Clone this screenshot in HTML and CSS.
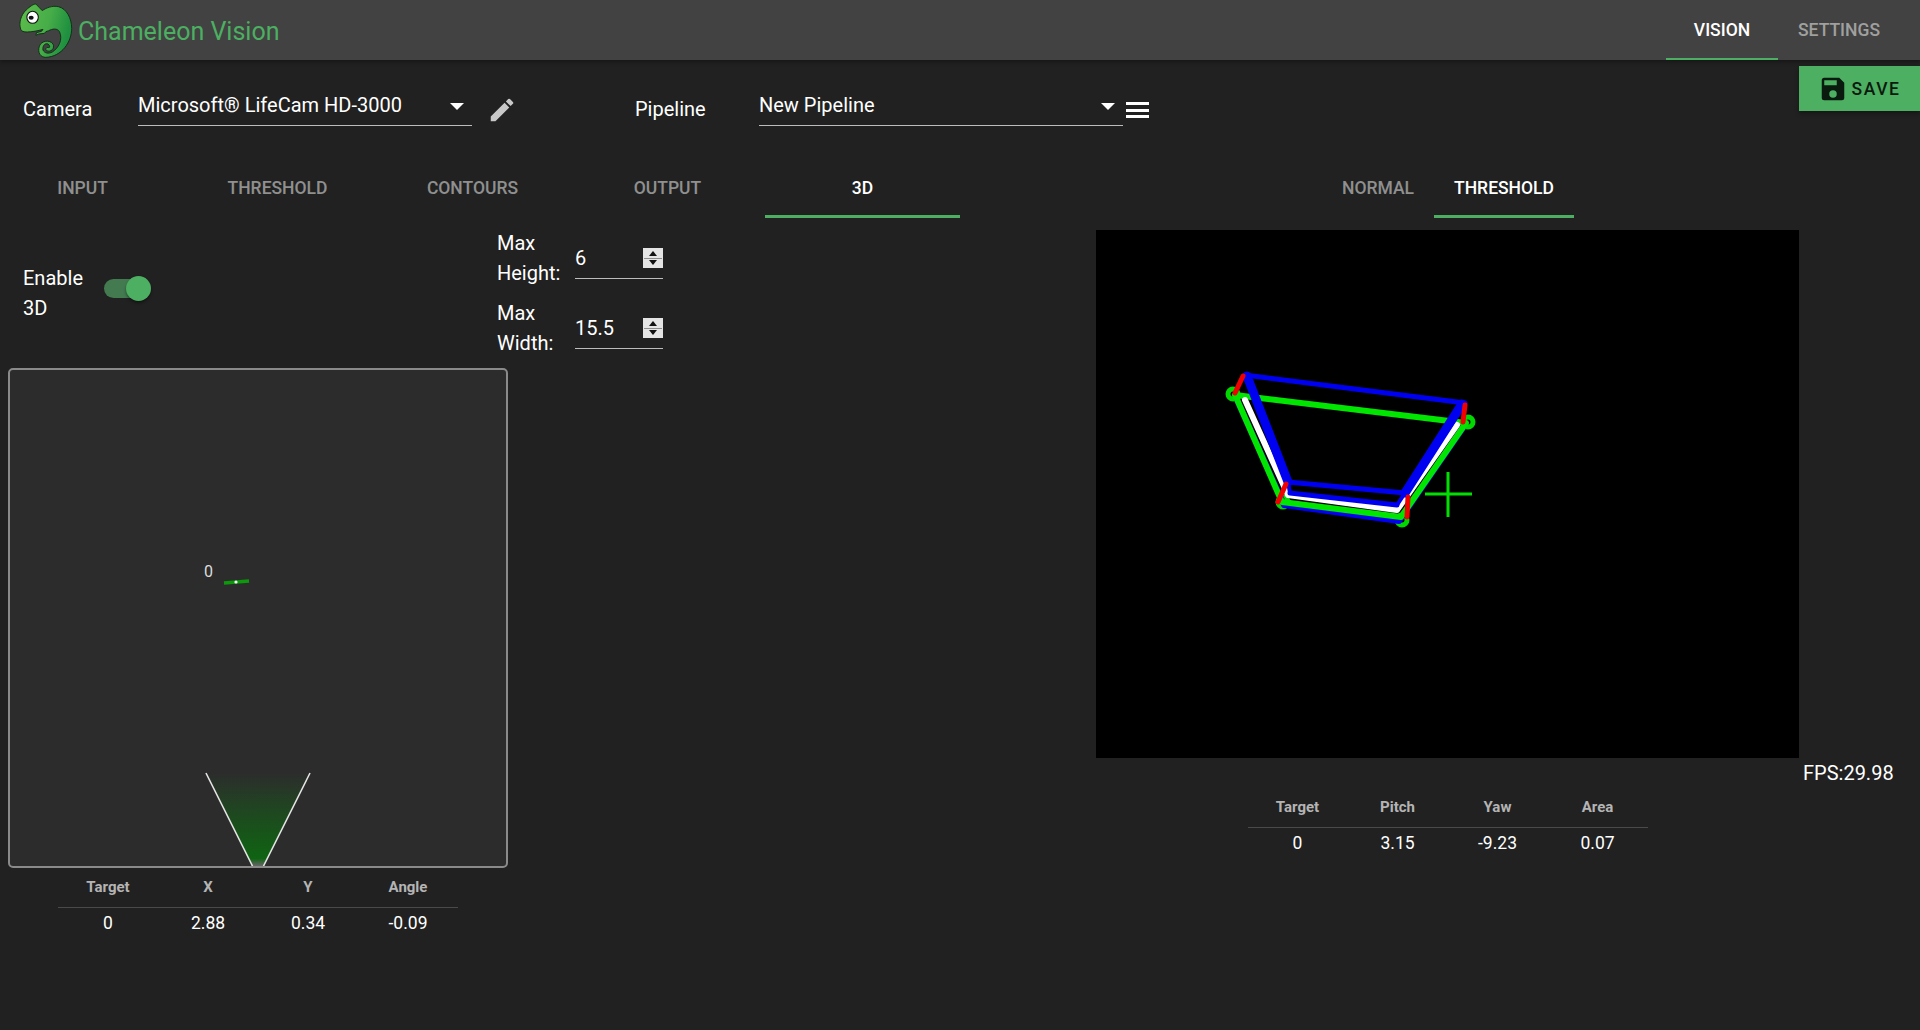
FILE: index.html
```html
<!DOCTYPE html>
<html lang="en">
<head>
<meta charset="utf-8">
<title>Chameleon Vision</title>
<link rel="stylesheet" href="styles.css">
</head>
<body>
<header class="appbar">
  <svg class="logo" viewBox="0 0 198 180" preserveAspectRatio="none" aria-hidden="true">
    <defs><linearGradient id="lg" x1="0" y1="0" x2="1" y2="0.25"><stop offset="0" stop-color="#5dbd4a"/><stop offset="0.6" stop-color="#46ad48"/><stop offset="1" stop-color="#1f9040"/></linearGradient></defs>
    <path d="M30 88 C24 70 30 45 45 30 C55 20 65 12 72 12 C78 18 84 26 90 32 C100 24 118 16 135 20 C158 26 172 55 172 85 C172 125 145 170 100 172 C85 172 76 158 82 138 C88 122 110 118 120 132 C126 145 114 158 102 152 C98 148 100 142 106 142 C112 146 112 136 106 132 C96 128 90 140 92 150 C96 160 108 162 118 156 C136 144 148 118 138 95 C132 84 118 86 108 92 L100 95 L96 100 L80 102 L72 106 L74 98 L88 94 L92 88 C80 92 60 96 48 96 C38 96 32 94 30 88 Z" fill="url(#lg)" stroke="#0a2a10" stroke-width="2.5"/>
    <ellipse cx="63" cy="52" rx="16" ry="18" fill="#fff" stroke="#111" stroke-width="3"/>
    <ellipse cx="59" cy="53" rx="7" ry="6" fill="#111"/>
  </svg>
  <span class="brand">Chameleon Vision</span>
  <nav class="nav-tabs">
    <a class="nav-tab active">VISION</a>
    <a class="nav-tab settings-tab">SETTINGS</a>
  </nav>
</header>
<main class="page">
  <div class="toolbar">
    <span class="label cam-label">Camera</span>
    <div class="select cam-select"><span>Microsoft® LifeCam HD-3000</span><i class="caret"></i></div>
    <svg class="pencil" viewBox="0 0 24 24" aria-hidden="true"><path d="M3 17.25V21h3.75L17.81 9.94l-3.75-3.75L3 17.25zM20.71 7.04a1 1 0 0 0 0-1.41l-2.34-2.34a1 1 0 0 0-1.41 0l-1.83 1.83 3.75 3.75 1.83-1.83z"/></svg>
    <span class="label pipe-label">Pipeline</span>
    <div class="select pipe-select"><span>New Pipeline</span><i class="caret"></i></div>
    <div class="burger"><i></i><i></i><i></i></div>
    <button class="save"><svg viewBox="0 0 24 24" aria-hidden="true"><path d="M17 3H5a2 2 0 0 0-2 2v14a2 2 0 0 0 2 2h14a2 2 0 0 0 2-2V7l-4-4zm-5 16a3 3 0 1 1 0-6 3 3 0 0 1 0 6zm3-10H5V5h10v4z"/></svg>SAVE</button>
  </div>
  <div class="columns">
    <section class="col-left">
      <div class="tabs main-tabs">
        <a class="tab">INPUT</a><a class="tab">THRESHOLD</a><a class="tab">CONTOURS</a><a class="tab">OUTPUT</a><a class="tab active">3D</a>
      </div>
      <div class="settings">
        <div class="enable">
          <span class="label enable-label">Enable<br>3D</span>
          <div class="switch"><i class="track"></i><i class="thumb"></i></div>
        </div>
        <div class="fields">
          <div class="field"><span class="label">Max<br>Height:</span><div class="num"><span>6</span><div class="spin"><b><i class="up"></i></b><b><i class="down"></i></b></div></div></div>
          <div class="field"><span class="label">Max<br>Width:</span><div class="num"><span>15.5</span><div class="spin"><b><i class="up"></i></b><b><i class="down"></i></b></div></div></div>
        </div>
      </div>
      <div class="plot">
        <span class="plot-num">0</span>
        <svg class="plot-svg" viewBox="0 0 500 500" aria-hidden="true">
          <defs><linearGradient id="fov" x1="0" y1="0" x2="0" y2="1"><stop offset="0" stop-color="#0f6a12" stop-opacity="0"/><stop offset="0.92" stop-color="#0f6412"/><stop offset="1" stop-color="#666"/></linearGradient></defs>
          <polygon points="198,405 302,405 256,498 244,498" fill="url(#fov)"/>
          <line x1="198" y1="405" x2="244.5" y2="498" class="fov-line"/>
          <line x1="302" y1="405" x2="255.5" y2="498" class="fov-line"/>
          <line x1="216" y1="215" x2="241" y2="213" stroke="#0a9a0a" stroke-width="3.5"/>
          <circle cx="228" cy="214" r="1.6" fill="#fff"/>
        </svg>
      </div>
      <table class="data left-table">
        <thead><tr><th>Target</th><th>X</th><th>Y</th><th>Angle</th></tr></thead>
        <tbody><tr><td>0</td><td>2.88</td><td>0.34</td><td>-0.09</td></tr></tbody>
      </table>
    </section>
    <section class="col-right">
      <div class="tabs view-tabs">
        <a class="tab normal">NORMAL</a><a class="tab thresh active">THRESHOLD</a>
      </div>
      <svg class="camera" viewBox="0 0 703 528" aria-hidden="true">
        <rect width="703" height="528" fill="#000"/>
        <g fill="none" stroke-linejoin="round" stroke-linecap="round">
          <circle cx="137" cy="164" r="5" stroke="#00d800" stroke-width="5"/>
          <circle cx="372" cy="192" r="5" stroke="#00d800" stroke-width="5"/>
          <circle cx="187" cy="272" r="5" stroke="#00d800" stroke-width="5"/>
          <circle cx="306" cy="290" r="5" stroke="#00d800" stroke-width="5"/>
          <path d="M141 170 L188 275 L303 291 L367 198" stroke="#0000f0" stroke-width="6"/>
          <polygon points="139,165 370,193 305,287 186,272" stroke="#00e600" stroke-width="6"/>
          <path d="M149 170 L192 265 L301 280 L361 195" stroke="#fff" stroke-width="6"/>
          <polygon points="149,145 369,173 309,263 192,252" stroke="#0000f0" stroke-width="5"/>
          <path d="M151 146 L192 252" stroke="#0000f0" stroke-width="9"/>
          <path d="M366 174 L309 263" stroke="#0000f0" stroke-width="9"/>
          <path d="M194 263 L301 275" stroke="#0000f0" stroke-width="5"/>
          <path d="M192 252 L194 263 M309 263 L301 275" stroke="#0000f0" stroke-width="4"/>
        </g>
        <g stroke="#f00000" stroke-width="5" stroke-linecap="round">
          <line x1="147" y1="146" x2="139" y2="163"/>
          <line x1="369" y1="175" x2="367" y2="192"/>
          <line x1="190" y1="254" x2="182" y2="272"/>
          <line x1="312" y1="267" x2="311" y2="287"/>
        </g>
        <g stroke="#00e000" stroke-width="3">
          <line x1="329" y1="264" x2="376" y2="264"/>
          <line x1="352" y1="242" x2="352" y2="287"/>
        </g>
      </svg>
      <div class="fps">FPS:29.98</div>
      <table class="data right-table">
        <thead><tr><th>Target</th><th>Pitch</th><th>Yaw</th><th>Area</th></tr></thead>
        <tbody><tr><td>0</td><td>3.15</td><td>-9.23</td><td>0.07</td></tr></tbody>
      </table>
    </section>
  </div>
</main>
</body>
</html>
```
FILE: styles.css
```css
* { box-sizing: border-box; }
html, body { margin: 0; height: 100%; }
body { background: #212121; color: #fff; font-family: Roboto, sans-serif; overflow: hidden; height: 1030px; }

.appbar { height: 60px; background: #424242; display: flex; align-items: center; padding-left: 10px; box-shadow: 0 2px 4px rgba(0,0,0,.35); position: relative; }
.logo { width: 71px; height: 60px; flex: none; }
.brand { margin-left: -3px; margin-top: 2px; color: #4caf61; font-size: 25px; font-weight: 400; }
.nav-tabs { margin-left: auto; display: flex; height: 60px; margin-right: 20px; }
.nav-tab { width: 112px; display: flex; align-items: center; justify-content: center; padding-top: 2px; font-size: 17.5px; font-weight: 500; color: rgba(255,255,255,.5); border-bottom: 2px solid transparent; }
.nav-tab.active { color: #fff; border-bottom-color: #4caf61; }
.settings-tab { width: 122px; }

.label { font-size: 20px; line-height: 30px; }
.toolbar { height: 75px; display: flex; position: relative; }
.cam-label { margin: 34px 0 0 23px; width: 115px; flex: none; }
.select { height: 43px; margin-top: 23px; border-bottom: 1px solid #bdbdbd; display: flex; align-items: flex-start; justify-content: space-between; font-size: 20px; line-height: 30px; padding-top: 7px; flex: none; }
.cam-select { width: 334px; }
.pipe-select { width: 364px; }
.caret { width: 0; height: 0; border-left: 7px solid transparent; border-right: 7px solid transparent; border-top: 7px solid #fff; margin: 13px 8px 0 0; }
.pencil { width: 30px; height: 30px; margin: 35px 0 0 15px; fill: #c8c8c8; flex: none; }
.pipe-label { margin: 34px 0 0 118px; width: 124px; flex: none; }
.burger { width: 23px; margin: 42px 0 0 3px; height: 16px; display: flex; flex-direction: column; justify-content: space-between; flex: none; }
.burger i { display: block; height: 3px; background: #fff; }
.save { margin: 6px 0 0 auto; width: 121px; height: 45px; background: #4caf61; border: 0; display: flex; align-items: center; justify-content: center; gap: 3px; font: 500 17.5px Roboto, sans-serif; letter-spacing: 1.6px; color: #0b1a0e; padding: 0; box-shadow: 0 3px 4px rgba(0,0,0,.3); }
.save svg { width: 30px; height: 30px; fill: #0b1a0e; }

.columns { display: flex; }
.col-left { width: 1085px; flex: none; }
.col-right { flex: 1; }

.tabs { display: flex; height: 83px; padding-top: 23px; }
.tab { height: 60px; display: flex; align-items: center; justify-content: center; font-size: 17.5px; font-weight: 500; color: rgba(255,255,255,.5); border-bottom: 3px solid transparent; padding-top: 3px; }
.tab.active { color: #fff; border-bottom-color: #4caf61; }
.main-tabs { margin-left: -15px; }
.main-tabs .tab { width: 195px; }
.view-tabs { margin-left: 237px; }
.view-tabs .normal { width: 112px; }
.view-tabs .thresh { width: 140px; }

.settings { display: flex; height: 150px; }
.enable { width: 497px; display: flex; align-items: center; padding-left: 23px; flex: none; }
.enable-label { width: 81px; }
.switch { position: relative; width: 47px; height: 25px; margin-bottom: 10px; }
.switch .track { position: absolute; left: 0; top: 3px; width: 40px; height: 19px; border-radius: 10px; background: #437a50; }
.switch .thumb { position: absolute; right: 0; top: 0; width: 25px; height: 25px; border-radius: 50%; background: #4caf61; box-shadow: 0 2px 3px rgba(0,0,0,.4); }
.fields { display: flex; flex-direction: column; gap: 10px; padding-top: 10px; }
.field { display: flex; height: 60px; width: 166px; }
.field .label { width: 78px; flex: none; }
.num { width: 88px; height: 51px; border-bottom: 1px solid #bdbdbd; font-size: 20px; display: flex; align-items: center; justify-content: space-between; padding-top: 10px; }
.spin { width: 20px; height: 20px; background: #8d8d8d; display: flex; flex-direction: column; gap: 1px; border: 1px solid #e4e4e4; }
.spin b { flex: 1; background: #e4e4e4; display: flex; align-items: center; justify-content: center; }
.spin i { width: 0; height: 0; border-left: 4.5px solid transparent; border-right: 4.5px solid transparent; }
.spin .up { border-bottom: 5px solid #111; }
.spin .down { border-top: 5px solid #111; }

.plot { width: 500px; height: 500px; margin-left: 8px; background: #2c2c2c; border: 2px solid #8a8a8a; border-radius: 5px; position: relative; overflow: hidden; }
.plot-svg { position: absolute; left: -2px; top: -2px; width: 500px; height: 500px; display: block; }
.fov-line { stroke: #e6e6e6; stroke-width: 1.6; }
.plot-num { position: absolute; left: 194px; top: 192px; font-size: 16px; line-height: 20px; color: #ddd; }

.data { border-collapse: collapse; table-layout: fixed; width: 400px; }
.data th { height: 40px; padding: 0; font-size: 15px; font-weight: 700; color: #b4b4b4; border-bottom: 1px solid #4a4a4a; text-align: center; width: 100px; }
.data td { height: 32px; padding: 0; font-size: 17.5px; text-align: center; color: #fff; }
.left-table { margin-left: 58px; margin-top: -1px; }
.right-table { margin-left: 162.5px; margin-top: -1px; }

.camera { display: block; width: 703px; height: 528px; margin-left: 11px; margin-top: 12px; }
.fps { font-size: 20px; line-height: 30px; margin-left: 718px; }
```
